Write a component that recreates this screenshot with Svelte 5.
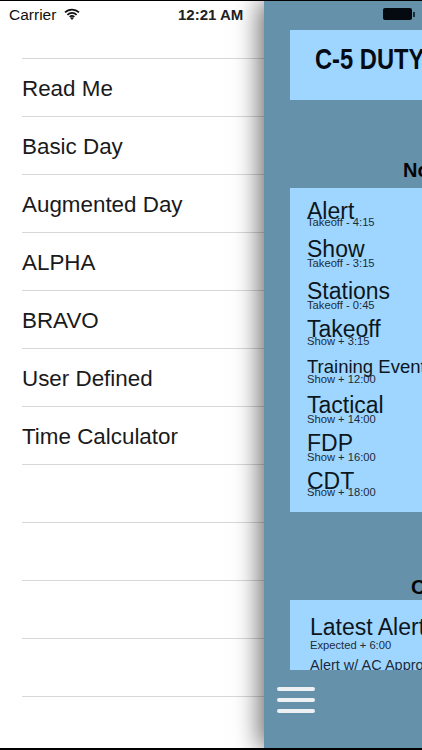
<script>
	const menuItems = ['Read Me', 'Basic Day', 'Augmented Day', 'ALPHA', 'BRAVO', 'User Defined', 'Time Calculator', '', '', '', '', ''];

	// gap = distance to the row above, drop = how far the caption sits under the title
	const events = [
		{ name: 'Alert', note: 'Takeoff - 4:15', gap: 0, drop: -8 },
		{ name: 'Show', note: 'Takeoff - 3:15', gap: 0, drop: -5 },
		{ name: 'Stations', note: 'Takeoff - 0:45', gap: 4, drop: -5 },
		{ name: 'Takeoff', note: 'Show + 3:15', gap: 0, drop: -7 },
		{ name: 'Training Event', note: 'Show + 12:00', gap: 0, drop: -7, small: true },
		{ name: 'Tactical', note: 'Show + 14:00', gap: 0, drop: -5 },
		{ name: 'FDP', note: 'Show + 16:00', gap: 0, drop: -5 },
		{ name: 'CDT', note: 'Show + 18:00', gap: 0, drop: -8 }
	];
</script>

<div class="screen">
	<div class="status">
		<div class="carrier">
			<span>Carrier</span>
			<svg width="16" height="12" viewBox="0 0 16 12" aria-hidden="true">
				<path d="M1 4.4a10 10 0 0 1 14 0M3.4 6.8a6.6 6.6 0 0 1 9.2 0M5.7 9a3.4 3.4 0 0 1 4.6 0" fill="none" stroke="#111" stroke-width="1.7" />
				<path d="M8 12l-1.7-2a2.4 2.4 0 0 1 3.4 0z" fill="#111" />
			</svg>
		</div>
		<span class="clock">12:21 AM</span>
		<div class="battery"><i></i></div>
	</div>

	<nav class="menu">
		{#each menuItems as item}
			<div class="menu-row">{item}</div>
		{/each}
	</nav>

	<section class="panel">
		<div class="scroller">
			<div class="title-card"><h1>C-5 DUTY DAY</h1></div>

			<h2 class="normal">Normal Timeline</h2>
			<div class="card events">
				{#each events as ev}
					<div class="event" style="margin-top: {ev.gap}px">
						<div class="event-name" class:small={ev.small}>{ev.name}</div>
						<div class="event-note" style="margin-top: {ev.drop}px">{ev.note}</div>
					</div>
				{/each}
			</div>

			<h2 class="other">Other Times</h2>
			<div class="card latest">
				<div class="latest-name">Latest Alert</div>
				<div class="event-note tight">Expected + 6:00</div>
				<div class="latest-next">Alert w/ AC Approval</div>
			</div>
		</div>

		<button class="burger" aria-label="Menu"><i></i><i></i><i></i></button>
	</section>
</div>

<style>
	:global(body) {
		margin: 0;
		background: #000;
	}

	.screen {
		position: relative;
		display: flex;
		width: 422px;
		height: 747px;
		margin: 1px 0 2px;
		overflow: hidden;
		background: #fff;
		color: #111;
		font-family: 'Liberation Sans', Arial, sans-serif;
	}

	.status {
		position: absolute;
		z-index: 2;
		top: 0;
		left: 0;
		right: 0;
		height: 29px;
		font-size: 15.5px;
	}

	.carrier {
		position: absolute;
		left: 9px;
		top: 5px;
		display: flex;
		align-items: center;
		gap: 8px;
	}

	.carrier svg {
		margin-top: -3px;
	}

	.clock {
		position: absolute;
		left: 178px;
		top: 5px;
		font-weight: 700;
		font-size: 15px;
		color: #222;
	}

	.battery {
		position: absolute;
		left: 383px;
		top: 7px;
		width: 29px;
		height: 12px;
		border-radius: 2px;
		background: #050a10;
	}

	.battery i {
		position: absolute;
		right: -3px;
		top: 4px;
		width: 2px;
		height: 5px;
		background: #1c2b36;
	}

	.menu {
		flex: 0 0 264px;
		padding-top: 57px;
	}

	.menu-row {
		display: flex;
		align-items: center;
		box-sizing: border-box;
		height: 58px;
		padding-top: 3px;
		margin-left: 22px;
		border-top: 1px solid #d8d8d8;
		font-size: 22.4px;
		line-height: 1;
		color: #1a1a1a;
		white-space: nowrap;
	}

	.panel {
		flex: 0 0 320px;
		display: flex;
		flex-direction: column;
		background: #6691ab;
		box-shadow: -4px 0 24px rgba(0, 0, 0, 0.6);
	}

	.scroller {
		height: 669px;
		padding: 29px 0 0 26px;
		box-sizing: border-box;
		overflow: hidden;
	}

	.title-card {
		height: 70px;
		background: #9fd6ff;
		display: flex;
		align-items: center;
		padding-left: 25px;
	}

	h1 {
		margin: 0 0 12px;
		font-size: 30px;
		font-weight: 700;
		color: #050a14;
		white-space: nowrap;
		transform: scaleX(0.79);
		transform-origin: left center;
	}

	h2 {
		margin: 0;
		font-size: 20px;
		font-weight: 700;
		line-height: 24px;
		color: #050505;
		white-space: nowrap;
	}

	.normal {
		margin: 58px 0 6px 113px;
	}

	.other {
		margin: 63px 0 1px 121px;
	}

	.card {
		background: #9fd6ff;
		white-space: nowrap;
	}

	.events {
		height: 324px;
		padding: 10px 0 0 17px;
		box-sizing: border-box;
	}

	.event {
		height: 38px;
	}

	.event-name {
		height: 26px;
		font-size: 23px;
		line-height: 26px;
		color: #0d1620;
	}

	.event-name.small {
		font-size: 18.5px;
	}

	.event-note {
		position: relative;
		font-size: 11.2px;
		line-height: 13px;
		color: #1d2b38;
	}

	.event-note.tight {
		margin-top: -1px;
	}

	.latest {
		height: 90px;
		padding: 14px 0 0 20px;
		box-sizing: border-box;
	}

	.latest-name {
		font-size: 23px;
		line-height: 26px;
		color: #0d1620;
	}

	.latest-next {
		margin-top: 5px;
		font-size: 14.5px;
		line-height: 16px;
		color: #1d2b38;
	}

	.burger {
		display: flex;
		flex-direction: column;
		gap: 7px;
		width: 38px;
		margin: 17px 0 0 13px;
		padding: 0;
		border: 0;
		background: none;
	}

	.burger i {
		display: block;
		height: 4px;
		border-radius: 2px;
		background: #eef1f3;
	}
</style>
